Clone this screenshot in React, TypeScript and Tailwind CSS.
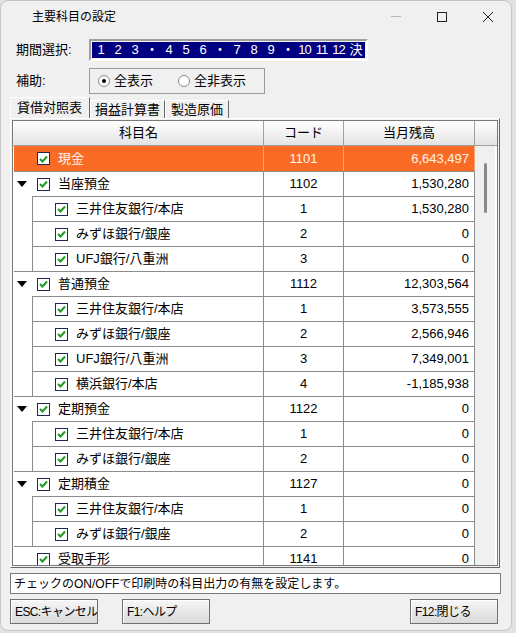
import React from "react";

type Row = {
  name: string;
  code: string;
  bal: string;
  child?: boolean;
  arrow?: boolean;
  sel?: boolean;
};

const rows: Row[] = [
  { name: "現金", code: "1101", bal: "6,643,497", sel: true },
  { name: "当座預金", code: "1102", bal: "1,530,280", arrow: true },
  { name: "三井住友銀行/本店", code: "1", bal: "1,530,280", child: true },
  { name: "みずほ銀行/銀座", code: "2", bal: "0", child: true },
  { name: "UFJ銀行/八重洲", code: "3", bal: "0", child: true },
  { name: "普通預金", code: "1112", bal: "12,303,564", arrow: true },
  { name: "三井住友銀行/本店", code: "1", bal: "3,573,555", child: true },
  { name: "みずほ銀行/銀座", code: "2", bal: "2,566,946", child: true },
  { name: "UFJ銀行/八重洲", code: "3", bal: "7,349,001", child: true },
  { name: "横浜銀行/本店", code: "4", bal: "-1,185,938", child: true },
  { name: "定期預金", code: "1122", bal: "0", arrow: true },
  { name: "三井住友銀行/本店", code: "1", bal: "0", child: true },
  { name: "みずほ銀行/銀座", code: "2", bal: "0", child: true },
  { name: "定期積金", code: "1127", bal: "0", arrow: true },
  { name: "三井住友銀行/本店", code: "1", bal: "0", child: true },
  { name: "みずほ銀行/銀座", code: "2", bal: "0", child: true },
  { name: "受取手形", code: "1141", bal: "0" },
];

const periods = ["1", "2", "3", "・", "4", "5", "6", "・", "7", "8", "9", "・", "10", "11", "12", "決"];

const font = { fontFamily: '"Liberation Sans", "Noto Sans CJK JP", sans-serif' };

const Check = () => (
  <div className="w-[13px] h-[13px] border border-[#1c2a52] bg-white flex items-center justify-center shrink-0">
    <svg width="9" height="8" viewBox="0 0 9 8">
      <path d="M1 4 L3.5 6.5 L8 1.5" stroke="#1e9a25" strokeWidth="2" fill="none" />
    </svg>
  </div>
);

const Arrow = () => (
  <svg width="10" height="6" viewBox="0 0 10 6" className="shrink-0">
    <path d="M0 0 H10 L5 6 Z" fill="#000" />
  </svg>
);

const Radio = ({ on }: { on?: boolean }) => (
  <div className="w-[12px] h-[12px] rounded-full border border-[#8a8a8a] bg-white flex items-center justify-center">
    {on && <div className="w-[4px] h-[4px] rounded-full bg-black" />}
  </div>
);

const Btn = ({ label }: { label: string }) => (
  <div className="w-[88px] h-[25px] border border-[#707070] bg-gradient-to-b from-[#f7f7f7] to-[#dadada] flex items-center pl-[4px] text-[12px] tracking-[-0.6px] whitespace-nowrap overflow-hidden shadow-[inset_1px_1px_0_#fff]">
    {label}
  </div>
);

export default function App() {
  return (
    <div className="w-[516px] h-[633px] bg-[#e2e2e2] text-black" style={font}>
      <div className="w-[512px] h-[631px] bg-[#f0f0f0] border border-[#c4c4c4] rounded-[8px] flex flex-col overflow-hidden">
        {/* title bar */}
        <div className="h-[31px] flex items-center shrink-0">
          <div className="pl-[31px] text-[12px] flex-1">主要科目の設定</div>
          <div className="w-[46px] flex justify-center">
            <div className="w-[10px] h-px bg-[#b8b8b8]" />
          </div>
          <div className="w-[46px] flex justify-center">
            <div className="w-[10px] h-[10px] border border-[#222]" />
          </div>
          <div className="w-[46px] flex justify-center">
            <svg width="10" height="10" viewBox="0 0 10 10">
              <path d="M0 0 L10 10 M10 0 L0 10" stroke="#222" strokeWidth="1" />
            </svg>
          </div>
        </div>

        {/* period selection */}
        <div className="flex items-center mt-[7px] h-[22px] pl-[15px]">
          <div className="w-[73px] text-[13px]">期間選択:</div>
          <div className="w-[279px] h-[22px] border-2 border-t-[#a0a0a0] border-l-[#a0a0a0] border-b-white border-r-white p-px">
            <div className="h-full bg-[#000080] text-white flex items-center text-[13px]">
              {periods.map((p, i) => (
                <div key={i} className="w-[17px] text-center tracking-[-1px]">
                  {p}
                </div>
              ))}
            </div>
          </div>
        </div>

        {/* sub display */}
        <div className="flex items-center mt-[7px] h-[26px] pl-[15px]">
          <div className="w-[73px] text-[13px]">補助:</div>
          <div className="w-[176px] h-[26px] border border-[#9a9a9a] flex items-center pl-[8px] text-[13px]">
            <Radio on />
            <span className="ml-[4px] w-[64px]">全表示</span>
            <Radio />
            <span className="ml-[4px]">全非表示</span>
          </div>
        </div>

        {/* tabs */}
        <div className="flex items-end mt-[3px] h-[21px] pl-[9px] text-[13px]">
          <div className="h-[21px] w-[80px] border-t border-l border-white border-r border-r-[#696969] flex items-center pl-[6px] bg-[#f0f0f0]">
            貸借対照表
          </div>
          <div className="h-[18px] w-[75px] border-t border-l border-white border-r border-r-[#696969] flex items-center pl-[4px]">
            損益計算書
          </div>
          <div className="h-[18px] w-[64px] border-t border-l border-white border-r border-r-[#696969] flex items-center pl-[5px]">
            製造原価
          </div>
        </div>

        {/* panel */}
        <div className="ml-[9px] w-[490px] h-[450px] border border-t-white border-l-white border-r-[#696969] border-b-[#696969] p-px">
          <div className="border border-[#7a7a7a] h-[446px] flex flex-col overflow-hidden bg-white">
            <div className="flex h-[25px] shrink-0 border-b border-[#a0a0a0] bg-gradient-to-b from-white to-[#e4e4e4] text-[13px] pl-px">
              <div className="w-[250px] border-r border-[#a0a0a0] flex items-center justify-center">科目名</div>
              <div className="w-[80px] border-r border-[#a0a0a0] flex items-center justify-center">コード</div>
              <div className="w-[131px] border-r border-[#a0a0a0] flex items-center justify-center">当月残高</div>
              <div className="w-[20px]" />
            </div>
            <div className="flex flex-1 overflow-hidden pl-px">
              <div className="w-[461px] overflow-hidden">
                {rows.map((r, i) => {
                  const top = i > 0;
                  const bg = r.sel ? "bg-[#fa6c25] text-[#fff4ea]" : "bg-white";
                  const line = r.sel ? "border-[#f8a274]" : "border-[#8c8c8c]";
                  return (
                    <div key={i} className={`flex h-[25px] text-[13px] ${bg}`}>
                      {r.child ? (
                        <div className="w-[250px] flex border-r border-[#8c8c8c]">
                          <div className="w-[18px]" />
                          <div className="flex-1 flex items-center border-l border-t border-[#8c8c8c] pl-[22px] gap-[8px]">
                            <Check />
                            <span>{r.name}</span>
                          </div>
                        </div>
                      ) : (
                        <div className={`w-[250px] flex items-center border-r ${line} ${top ? "border-t" : ""}`}>
                          <div className="w-[23px] flex justify-start pl-[3px]">{r.arrow && <Arrow />}</div>
                          <Check />
                          <span className="ml-[8px]">{r.name}</span>
                        </div>
                      )}
                      <div className={`w-[80px] flex items-center justify-center border-r ${line} ${top ? "border-t border-t-[#8c8c8c]" : ""}`}>
                        {r.code}
                      </div>
                      <div className={`w-[131px] flex items-center justify-end pr-[5px] border-r ${line} ${top ? "border-t border-t-[#8c8c8c]" : ""}`}>
                        {r.bal}
                      </div>
                    </div>
                  );
                })}
              </div>
              <div className="w-[20px] bg-[#f0f0f0] flex justify-center pt-[17px]">
                <div className="w-[3px] h-[50px] bg-[#8a8a8a] rounded-full" />
              </div>
            </div>
          </div>
        </div>

        {/* status */}
        <div className="ml-[9px] mt-[5px] w-[491px] h-[21px] border border-[#7a7a7a] bg-white flex items-center pl-[3px] text-[12px] shrink-0">
          チェックのON/OFFで印刷時の科目出力の有無を設定します。
        </div>

        {/* buttons */}
        <div className="flex mt-[5px] pl-[9px] shrink-0">
          <Btn label="ESC:キャンセル" />
          <div className="w-[24px]" />
          <Btn label="F1:ヘルプ" />
          <div className="flex-1" />
          <div className="mr-[13px]">
            <Btn label="F12:閉じる" />
          </div>
        </div>
      </div>
    </div>
  );
}
